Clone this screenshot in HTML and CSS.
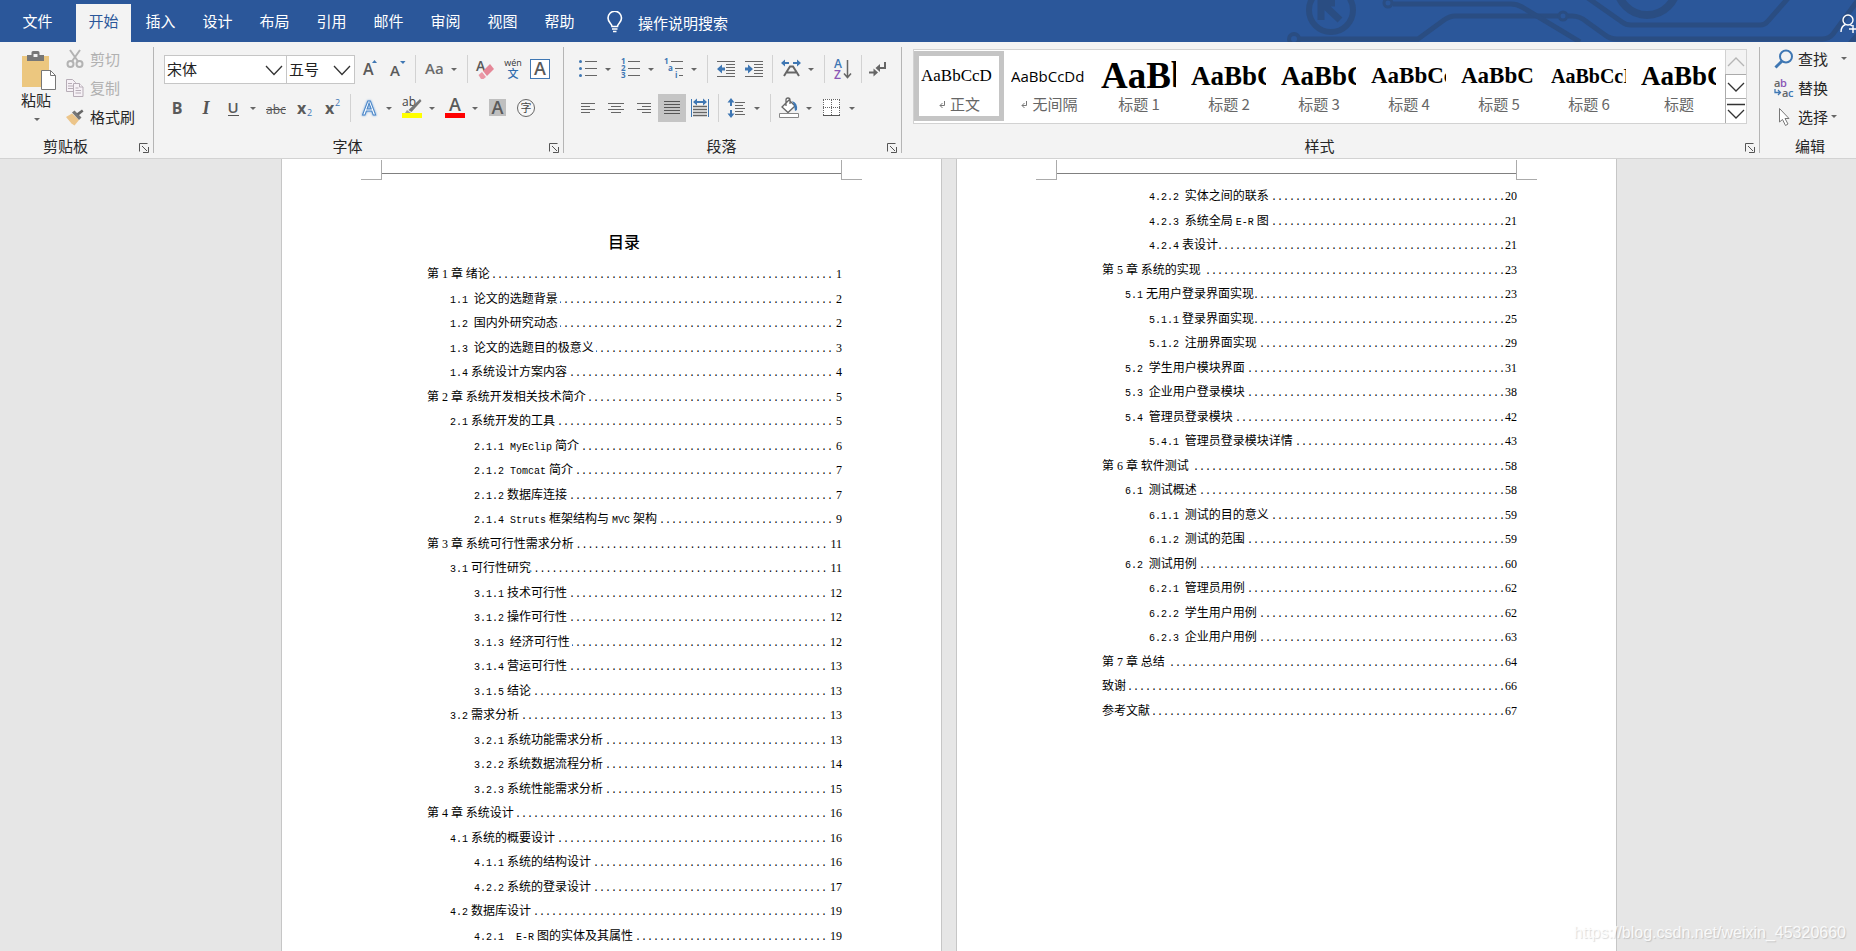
FILE: index.html
```html
<!DOCTYPE html>
<html lang="zh-CN">
<head>
<meta charset="utf-8">
<title>目录 - Word</title>
<link rel="stylesheet" href="styles.css">
</head>
<body>
<div class="app">
  <header class="tabbar">
    <svg class="circuit" width="570" height="42" viewBox="1286 0 570 42" aria-hidden="true">
      <g fill="none" stroke="#2a4d82" stroke-width="5">
        <circle cx="1331" cy="10" r="22" stroke-width="6"/>
        <path d="M1321 20V3h14M1322 3l18 17" stroke-width="7"/>
        <circle cx="1294" cy="39" r="5" stroke-width="4"/>
        <path d="M1299 39h119l26-19q6-4 11-4h103M1568 16h4q8 0 15 6l18 13q5 4 12 4h205q7 0 11-5l25-34"/>
        <circle cx="1563" cy="16" r="4" stroke-width="3"/>
        <circle cx="1388" cy="3" r="4" stroke-width="3"/>
        <path d="M1393 4h118q6 0 11 3l58 35M1585-4l37 26q4 3 9 3h129q5 0 8-4l22-25M1848 46l12-14"/>
        <circle cx="1647" cy="-15" r="30" stroke-width="8"/>
      </g>
    </svg>
    <nav class="tabs">
      <button class="tab file">文件</button>
      <button class="tab active">开始</button>
      <button class="tab">插入</button>
      <button class="tab">设计</button>
      <button class="tab">布局</button>
      <button class="tab">引用</button>
      <button class="tab">邮件</button>
      <button class="tab">审阅</button>
      <button class="tab">视图</button>
      <button class="tab">帮助</button>
    </nav>
    <button class="tell">
      <svg width="18" height="22" viewBox="0 0 18 22" fill="none" stroke="#fff" stroke-width="1.600"><path d="M6 15.500c0-3-4-4-4-8.500a6.500 6.500 0 0 1 13.500 0c0 4.500-4 5.500-4 8.500zM6 18h5.500M7 20.500h3.500"/></svg>
      <span>操作说明搜索</span>
    </button>
    <button class="share" aria-label="共享">
      <svg width="16" height="20" viewBox="0 0 16 20" fill="none" stroke="#fff" stroke-width="1.400"><circle cx="8" cy="6" r="5"/><path d="M1 18c0-4 2-6.500 4.500-7.500M10 10.500l2 1.500M9 15h7M13 11v8"/></svg>
    </button>
  </header>

  <section class="ribbon">
    <div class="group clipboard">
      <div class="body">
        <button class="paste">
          <svg width="36" height="40" viewBox="0 0 36 40"><path d="M1 5h27v31H1z" fill="#ecc77f"/><path d="M6 4h4.500V1.500q0-1.500 1.500-1.500h5q1.500 0 1.500 1.500V4H23v6H6z" fill="#777"/><path d="M12.500 3h4v3h-4z" fill="#f3f3f3"/><path d="M20.500 19.500h9l5 5v14h-14z" fill="#fff" stroke="#777"/><path d="M29.500 19.500v5h5" fill="none" stroke="#777"/></svg>
          <span>粘贴</span>
          <i class="arrow"></i>
        </button>
        <div class="stack">
          <button class="cmd" disabled><svg width="18" height="20" viewBox="0 0 18 20" fill="none" stroke="#b3b3b3" stroke-width="2"><path d="M4 1l8.500 12M14 1L5.500 13"/><circle cx="4.500" cy="15" r="3"/><circle cx="13.500" cy="15" r="3"/></svg>剪切</button>
          <button class="cmd" disabled><svg width="18" height="20" viewBox="0 0 18 20" fill="#f6f1f6" stroke="#b7adb7"><path d="M.5 1.500h6l3 3v9h-9z"/><path d="M2 5.500h4M2 8h5M2 10.500h5" /><path d="M7.500 5.500h6l3.500 3.500v9.500H7.500z"/><path d="M9.500 10h3M9.500 12.500h5.500M9.500 15h5.500M13.500 5.500v3.500h3.500"/></svg>复制</button>
          <button class="cmd"><svg width="18" height="20" viewBox="0 0 18 20"><path d="M0 10l6-3.500 7 6.500-4.500 5.500-3-2z" fill="#ecc58a"/><path d="M6 5.500l2.500-2 7 7-2.500 2.500z" fill="#777"/><path d="M10.500 6.500L16 2.500l1.500 2-5 4z" fill="#666"/></svg>格式刷</button>
        </div>
      </div>
      <div class="foot"><span>剪贴板</span><button class="launch" aria-label="剪贴板设置"><svg width="10" height="10" viewBox="0 0 10 10"><path d="M.5 8.500V.500H8.500M3 3l5 5M9.500 4v5.500H4" fill="none" stroke="#555"/></svg></button></div>
    </div>

    <div class="group font">
      <div class="rows">
        <div class="row">
          <label class="combo name"><select aria-label="字体"><option>宋体</option></select><svg width="18" height="11" viewBox="0 0 18 11"><path d="M1 1l8 8.500L17 1" fill="none" stroke="#333" stroke-width="1.300"/></svg></label>
          <label class="combo size"><select aria-label="字号"><option>五号</option></select><svg width="18" height="11" viewBox="0 0 18 11"><path d="M1 1l8 8.500L17 1" fill="none" stroke="#333" stroke-width="1.300"/></svg></label>
          <button class="b" aria-label="增大字号"><svg viewBox="0 0 28 28"><text x="8" y="20" class="g" font-size="16">A</text><path d="M17 8l2.500-3L22 8z" fill="#3f77b3"/></svg></button>
          <button class="b" aria-label="减小字号"><svg viewBox="0 0 28 28"><text x="7" y="21" class="g" font-size="15">A</text><path d="M17 6h5.500L20 9z" fill="#3f77b3"/></svg></button>
          <i class="sep"></i>
          <button class="b split" aria-label="更改大小写"><svg viewBox="0 0 28 28"><text x="5" y="19" class="g light" font-size="15">Aa</text></svg><i class="arrow"></i></button>
          <i class="sep"></i>
          <button class="b" aria-label="清除格式"><svg viewBox="0 0 28 28"><text x="4" y="16" class="g" font-size="14">A</text><path d="M11 16l7-7 4 5-7 7z" fill="#e58797"/><path d="M6.500 20l3.500-3 4 5-2.500 2H9z" fill="#eb98a6"/></svg></button>
          <button class="b" aria-label="拼音指南"><svg viewBox="0 0 28 28"><text x="13" y="11" text-anchor="middle" font-family="Open Sans" font-size="9" fill="#333">wén</text><text x="13" y="23" text-anchor="middle" font-family="Noto Sans CJK SC" font-size="11" font-weight="500" fill="#2f6cad">文</text></svg></button>
          <button class="b" aria-label="字符边框"><svg viewBox="0 0 28 28"><rect x="2.500" y="4.500" width="19" height="19" fill="#fff" stroke="#3f77b3"/><text x="12" y="20" text-anchor="middle" class="g" font-size="18">A</text></svg></button>
        </div>
        <div class="row">
          <button class="b" aria-label="加粗"><svg viewBox="0 0 28 28"><text x="14" y="20" text-anchor="middle" class="g bold" font-size="16">B</text></svg></button>
          <button class="b" aria-label="倾斜"><svg viewBox="0 0 28 28"><text x="15" y="20" text-anchor="middle" fill="#555" font-family="Liberation Serif" font-style="italic" font-weight="700" font-size="18">I</text></svg></button>
          <button class="b split" aria-label="下划线"><svg viewBox="0 0 28 28"><text x="14" y="19" text-anchor="middle" class="g" font-size="15">U</text><path d="M9 21.500h11" stroke="#555"/></svg><i class="arrow"></i></button>
          <button class="b" aria-label="删除线"><svg viewBox="0 0 28 28"><text x="14" y="20" text-anchor="middle" fill="#555" font-family="Open Sans" font-size="12">abc</text><path d="M4 15.500h20" stroke="#555"/></svg></button>
          <button class="b" aria-label="下标"><svg viewBox="0 0 28 28"><text x="7" y="20" class="g bold" font-size="16">x</text><text x="17" y="22" fill="#3f77b3" font-family="Open Sans" font-size="9">2</text></svg></button>
          <button class="b" aria-label="上标"><svg viewBox="0 0 28 28"><text x="7" y="20" class="g bold" font-size="16">x</text><text x="17" y="12" fill="#3f77b3" font-family="Open Sans" font-size="9">2</text></svg></button>
          <i class="sep"></i>
          <button class="b split" aria-label="文本效果"><svg viewBox="0 0 28 28"><text class="glow" x="14" y="21" text-anchor="middle">A</text></svg><i class="arrow"></i></button>
          <button class="b split" aria-label="突出显示"><svg viewBox="0 0 28 28"><text x="4" y="12" fill="#444" font-family="Open Sans" font-size="12">ab</text><path d="M22 5l1.500 2-10 11-3-2z" fill="#777"/><path d="M9 16l4 3H7z" fill="#999"/><path d="M4 19h20v5H4z" fill="#ff0"/></svg><i class="arrow"></i></button>
          <button class="b split" aria-label="字体颜色"><svg viewBox="0 0 28 28"><text x="14" y="17" text-anchor="middle" class="g" font-size="18">A</text><path d="M4 19h20v5H4z" fill="#f00"/></svg><i class="arrow"></i></button>
          <button class="b" aria-label="字符底纹"><svg viewBox="0 0 28 28"><path d="M5 5h17v17H5z" fill="#bfbfbf"/><text x="13.500" y="20" text-anchor="middle" class="g" font-size="18">A</text></svg></button>
          <button class="b" aria-label="带圈字符"><svg viewBox="0 0 28 28"><circle cx="14" cy="14" r="8.500" fill="#f8f8f8" stroke="#666"/><text x="14" y="18" text-anchor="middle" fill="#444" font-family="Noto Sans CJK SC" font-size="11">字</text></svg></button>
        </div>
      </div>
      <div class="foot"><span>字体</span><button class="launch" aria-label="字体设置"><svg width="10" height="10" viewBox="0 0 10 10"><path d="M.5 8.500V.500H8.500M3 3l5 5M9.500 4v5.500H4" fill="none" stroke="#555"/></svg></button></div>
    </div>

    <div class="group para">
      <div class="rows">
        <div class="row">
          <button class="b split" aria-label="项目符号"><svg viewBox="0 0 28 28"><path d="M11 6.500h12M11 13.500h12M11 20.500h12" stroke="#666"/><g fill="#3f77b3"><circle cx="6.500" cy="6.500" r="1.500"/><circle cx="6.500" cy="13.500" r="1.500"/><circle cx="6.500" cy="20.500" r="1.500"/></g></svg><i class="arrow"></i></button>
          <button class="b split" aria-label="编号"><svg viewBox="0 0 28 28"><path d="M11 6.500h12M11 13.500h12M11 20.500h12" stroke="#666"/><g class="num"><text x="4" y="9">1</text><text x="4" y="16">2</text><text x="4" y="23">3</text></g></svg><i class="arrow"></i></button>
          <button class="b split" aria-label="多级列表"><svg viewBox="0 0 28 28"><path d="M11 6.500h12M15 13.500h8M19 20.500h4" stroke="#666"/><g class="num"><text x="4" y="9">1</text><text x="8" y="16">a</text><text x="15" y="23">i</text></g></svg><i class="arrow"></i></button>
          <i class="sep"></i>
          <button class="b" aria-label="减少缩进"><svg viewBox="0 0 28 28"><path d="M5 6.500h18M14 9.500h9M14 12.500h9M14 15.500h9M14 18.500h9M5 21.500h18" stroke="#666"/><path d="M5 14l5-4.500v3h3v3h-3v3z" fill="#3f77b3"/></svg></button>
          <button class="b" aria-label="增加缩进"><svg viewBox="0 0 28 28"><path d="M5 6.500h18M14 9.500h9M14 12.500h9M14 15.500h9M14 18.500h9M5 21.500h18" stroke="#666"/><path d="M13 14l-5-4.500v3H5v3h3v3z" fill="#3f77b3"/></svg></button>
          <i class="sep"></i>
          <button class="b split" aria-label="中文版式"><svg viewBox="0 0 28 28"><path d="M7 21l6-9.500h3L22 21M10 17.500h9" fill="none" stroke="#666" stroke-width="2"/><path d="M4 8l4-3.500V7h4v2H8v2.500zM24 8l-4-3.500V7h-4v2h4v2.500z" fill="#3f77b3"/></svg><i class="arrow"></i></button>
          <i class="sep"></i>
          <button class="b" aria-label="排序"><svg viewBox="0 0 28 28"><text x="5" y="13" fill="#3f77b3" font-family="Open Sans" font-weight="600" font-size="12">A</text><text x="5" y="24" fill="#8a56b5" font-family="Open Sans" font-weight="600" font-size="12">Z</text><path d="M18.500 5v17M15 18.500l3.500 4 3.500-4" fill="none" stroke="#666" stroke-width="1.500"/></svg></button>
          <i class="sep"></i>
          <button class="b" aria-label="显示编辑标记"><svg viewBox="0 0 28 28"><path d="M19 7v6h-6M3 17.500h6" fill="none" stroke="#666" stroke-width="2"/><path d="M9.500 13l4.500-4v8zM12 17.500l-4.500-4v8z" fill="#666"/></svg></button>
        </div>
        <div class="row">
          <button class="b" aria-label="左对齐"><svg viewBox="0 0 28 28"><path d="M7 9.500h14M7 12.500h9M7 15.500h14M7 18.500h9" stroke="#666"/></svg></button>
          <button class="b" aria-label="居中"><svg viewBox="0 0 28 28"><path d="M6 9.500h16M9 12.500h10M6 15.500h16M9 18.500h10" stroke="#666"/></svg></button>
          <button class="b" aria-label="右对齐"><svg viewBox="0 0 28 28"><path d="M7 9.500h14M12 12.500h9M7 15.500h14M12 18.500h9" stroke="#666"/></svg></button>
          <button class="b on" aria-label="两端对齐"><svg viewBox="0 0 28 28"><path d="M6 7.500h16M6 10.500h16M6 13.500h16M6 16.500h16M6 19.500h16" stroke="#555"/></svg></button>
          <button class="b" aria-label="分散对齐"><svg viewBox="0 0 28 28"><path d="M5.500 5v18M22.500 5v18" stroke="#3f77b3"/><path d="M7 12.500h14M7 15.500h14M7 18.500h14M7 21.500h14" stroke="#666" stroke-width="1.500"/><path d="M7 8l4-3.500V7h6V4.500L21 8l-4 3.500V9h-6v2.500z" fill="#3f77b3"/></svg></button>
          <i class="sep"></i>
          <button class="b split" aria-label="行距"><svg viewBox="0 0 28 28"><path d="M12 8.500h10M12 11.500h8M12 14.500h10M12 17.500h8M12 20.500h10" stroke="#666"/><path d="M8 4l3.500 4.500h-2.500v3.500H7V8.500H4.500zM8 24l3.500-4.500h-2.500V16H7v3.500H4.500z" fill="#3f77b3"/></svg><i class="arrow"></i></button>
          <i class="sep"></i>
          <button class="b split" aria-label="底纹"><svg viewBox="0 0 28 28"><path d="M7 13l7-7 6 6-7 6.500zM11 12V6q0-2 2-2t2 2v4" fill="#fff" stroke="#666" stroke-width="1.300"/><path d="M17 7q6 2 5 9l-2 1-1-6z" fill="#3f77b3"/><path d="M4.500 19.500h19v4h-19z" fill="#fff" stroke="#888"/></svg><i class="arrow"></i></button>
          <button class="b split" aria-label="边框"><svg viewBox="0 0 28 28"><path d="M5 5h17v17H5z" fill="#fff"/><path d="M5 5.500h17M5.500 6v16M21.500 6v16M13.500 6v16M5 13.500h17" fill="none" stroke="#666" stroke-dasharray="1 1"/><path d="M5 21.500h17" stroke="#555"/></svg><i class="arrow"></i></button>
        </div>
      </div>
      <div class="foot"><span>段落</span><button class="launch" aria-label="段落设置"><svg width="10" height="10" viewBox="0 0 10 10"><path d="M.5 8.500V.500H8.500M3 3l5 5M9.500 4v5.500H4" fill="none" stroke="#555"/></svg></button></div>
    </div>

    <div class="group styles">
      <div class="gallery">
        <div class="items">
          <button class="style sel"><span class="pv normal">AaBbCcD</span><span class="nm"><svg class="ret" viewBox="0 0 8 9"><path d="M6.500 1v4.500H2M4.500 3L2 5.500 4.500 8" fill="none" stroke="#777"/></svg>正文</span></button>
          <button class="style"><span class="pv plain">AaBbCcDd</span><span class="nm"><svg class="ret" viewBox="0 0 8 9"><path d="M6.500 1v4.500H2M4.500 3L2 5.500 4.500 8" fill="none" stroke="#777"/></svg>无间隔</span></button>
          <button class="style"><span class="pv h1">AaBb</span><span class="nm">标题 1</span></button>
          <button class="style"><span class="pv h2">AaBbC</span><span class="nm">标题 2</span></button>
          <button class="style"><span class="pv h2">AaBbC</span><span class="nm">标题 3</span></button>
          <button class="style"><span class="pv h4">AaBbCc</span><span class="nm">标题 4</span></button>
          <button class="style"><span class="pv h4">AaBbC</span><span class="nm">标题 5</span></button>
          <button class="style"><span class="pv h6">AaBbCcI</span><span class="nm">标题 6</span></button>
          <button class="style"><span class="pv h2">AaBbC</span><span class="nm">标题</span></button>
        </div>
        <div class="scroll">
          <button disabled aria-label="上一行"><svg width="18" height="10" viewBox="0 0 18 10"><path d="M1 9l8-8 8 8" fill="none" stroke="#b5b5b5" stroke-width="1.300"/></svg></button>
          <button aria-label="下一行"><svg width="18" height="10" viewBox="0 0 18 10"><path d="M1 1l8 8 8-8" fill="none" stroke="#333" stroke-width="1.300"/></svg></button>
          <button aria-label="其他样式"><svg width="18" height="16" viewBox="0 0 18 16"><path d="M0 1.500h18M1 7l8 8 8-8" fill="none" stroke="#333" stroke-width="1.300"/></svg></button>
        </div>
      </div>
      <div class="foot"><span>样式</span><button class="launch" aria-label="样式设置"><svg width="10" height="10" viewBox="0 0 10 10"><path d="M.5 8.500V.500H8.500M3 3l5 5M9.500 4v5.500H4" fill="none" stroke="#555"/></svg></button></div>
    </div>

    <div class="group edit">
      <div class="stack">
        <button class="cmd find"><svg width="20" height="20" viewBox="0 0 20 20" fill="none" stroke="#3f77b3"><circle cx="12" cy="7.500" r="6" stroke-width="2"/><path d="M8 12l-6.500 6.500" stroke-width="3"/></svg>查找<i class="arrow"></i></button>
        <button class="cmd"><svg width="20" height="20" viewBox="0 0 20 20"><g font-family="Open Sans" font-weight="600" font-size="11"><text x="0" y="9" fill="#666">a</text><text x="6" y="9" fill="#8a56b5">b</text><text x="8" y="19" fill="#666">a</text><text x="14" y="19" fill="#3f77b3">c</text></g><path d="M1 11v3.500h5M4 12l2.500 2.500L4 17" fill="none" stroke="#3f77b3" stroke-width="1.300"/></svg>替换</button>
        <button class="cmd"><svg width="20" height="20" viewBox="0 0 20 20"><path d="M5.500 1.500v13.500l3-2.500 3 6 2.500-1.500-3-5.500h4z" fill="#fff" stroke="#777"/></svg>选择<i class="arrow"></i></button>
      </div>
      <div class="foot"><span>编辑</span></div>
    </div>
  </section>

  <main class="desk">
    <article class="page">
      <div class="head"><i class="rule"></i></div>
      <div class="text">
        <h1>目录</h1>
        <ol class="toc">
          <li><a href="#"><span class="t">第<b>1</b>章 绪论 </span><i></i><b>1</b></a></li>
          <li class="l2"><a href="#"><span class="t"><b>1.1</b> 论文的选题背景 </span><i></i><b>2</b></a></li>
          <li class="l2"><a href="#"><span class="t"><b>1.2</b> 国内外研究动态 </span><i></i><b>2</b></a></li>
          <li class="l2"><a href="#"><span class="t"><b>1.3</b> 论文的选题目的极意义 </span><i></i><b>3</b></a></li>
          <li class="l2"><a href="#"><span class="t"><b>1.4</b>系统设计方案内容</span><i></i><b>4</b></a></li>
          <li><a href="#"><span class="t">第<b>2</b>章 系统开发相关技术简介 </span><i></i><b>5</b></a></li>
          <li class="l2"><a href="#"><span class="t"><b>2.1</b>系统开发的工具</span><i></i><b>5</b></a></li>
          <li class="l3"><a href="#"><span class="t"><b>2.1.1 MyEclip</b>简介</span><i></i><b>6</b></a></li>
          <li class="l3"><a href="#"><span class="t"><b>2.1.2 Tomcat</b>简介</span><i></i><b>7</b></a></li>
          <li class="l3"><a href="#"><span class="t"><b>2.1.2</b>数据库连接</span><i></i><b>7</b></a></li>
          <li class="l3"><a href="#"><span class="t"><b>2.1.4 Struts</b>框架结构与<b>MVC</b>架构</span><i></i><b>9</b></a></li>
          <li><a href="#"><span class="t">第<b>3</b>章 系统可行性需求分析 </span><i></i><b>11</b></a></li>
          <li class="l2"><a href="#"><span class="t"><b>3.1</b>可行性研究</span><i></i><b>11</b></a></li>
          <li class="l3"><a href="#"><span class="t"><b>3.1.1</b>技术可行性</span><i></i><b>12</b></a></li>
          <li class="l3"><a href="#"><span class="t"><b>3.1.2</b>操作可行性</span><i></i><b>12</b></a></li>
          <li class="l3"><a href="#"><span class="t"><b>3.1.3</b> 经济可行性 </span><i></i><b>12</b></a></li>
          <li class="l3"><a href="#"><span class="t"><b>3.1.4</b>营运可行性</span><i></i><b>13</b></a></li>
          <li class="l3"><a href="#"><span class="t"><b>3.1.5</b>结论</span><i></i><b>13</b></a></li>
          <li class="l2"><a href="#"><span class="t"><b>3.2</b>需求分析</span><i></i><b>13</b></a></li>
          <li class="l3"><a href="#"><span class="t"><b>3.2.1</b>系统功能需求分析</span><i></i><b>13</b></a></li>
          <li class="l3"><a href="#"><span class="t"><b>3.2.2</b>系统数据流程分析</span><i></i><b>14</b></a></li>
          <li class="l3"><a href="#"><span class="t"><b>3.2.3</b>系统性能需求分析</span><i></i><b>15</b></a></li>
          <li><a href="#"><span class="t">第<b>4</b>章 系统设计 </span><i></i><b>16</b></a></li>
          <li class="l2"><a href="#"><span class="t"><b>4.1</b>系统的概要设计</span><i></i><b>16</b></a></li>
          <li class="l3"><a href="#"><span class="t"><b>4.1.1</b>系统的结构设计</span><i></i><b>16</b></a></li>
          <li class="l3"><a href="#"><span class="t"><b>4.2.2</b>系统的登录设计</span><i></i><b>17</b></a></li>
          <li class="l2"><a href="#"><span class="t"><b>4.2</b>数据库设计</span><i></i><b>19</b></a></li>
          <li class="l3"><a href="#"><span class="t"><b>4.2.1  E-R</b>图的实体及其属性</span><i></i><b>19</b></a></li>
        </ol>
      </div>
    </article>
    <article class="page next">
      <div class="head"><i class="rule"></i></div>
      <div class="text">
        <ol class="toc">
          <li class="l3"><a href="#"><span class="t"><b>4.2.2</b> 实体之间的联系 </span><i></i><b>20</b></a></li>
          <li class="l3"><a href="#"><span class="t"><b>4.2.3</b> 系统全局<b>E-R</b>图 </span><i></i><b>21</b></a></li>
          <li class="l3"><a href="#"><span class="t"><b>4.2.4</b>表设计</span><i></i><b>21</b></a></li>
          <li><a href="#"><span class="t">第<b>5</b>章 系统的实现 </span><i></i><b>23</b></a></li>
          <li class="l2"><a href="#"><span class="t"><b>5.1</b>无用户登录界面实现</span><i></i><b>23</b></a></li>
          <li class="l3"><a href="#"><span class="t"><b>5.1.1</b>登录界面实现</span><i></i><b>25</b></a></li>
          <li class="l3"><a href="#"><span class="t"><b>5.1.2</b> 注册界面实现 </span><i></i><b>29</b></a></li>
          <li class="l2"><a href="#"><span class="t"><b>5.2</b> 学生用户模块界面 </span><i></i><b>31</b></a></li>
          <li class="l2"><a href="#"><span class="t"><b>5.3</b> 企业用户登录模块 </span><i></i><b>38</b></a></li>
          <li class="l2"><a href="#"><span class="t"><b>5.4</b> 管理员登录模块 </span><i></i><b>42</b></a></li>
          <li class="l3"><a href="#"><span class="t"><b>5.4.1</b> 管理员登录模块详情 </span><i></i><b>43</b></a></li>
          <li><a href="#"><span class="t">第<b>6</b>章 软件测试 </span><i></i><b>58</b></a></li>
          <li class="l2"><a href="#"><span class="t"><b>6.1</b> 测试概述 </span><i></i><b>58</b></a></li>
          <li class="l3"><a href="#"><span class="t"><b>6.1.1</b> 测试的目的意义 </span><i></i><b>59</b></a></li>
          <li class="l3"><a href="#"><span class="t"><b>6.1.2</b> 测试的范围 </span><i></i><b>59</b></a></li>
          <li class="l2"><a href="#"><span class="t"><b>6.2</b> 测试用例 </span><i></i><b>60</b></a></li>
          <li class="l3"><a href="#"><span class="t"><b>6.2.1</b> 管理员用例 </span><i></i><b>62</b></a></li>
          <li class="l3"><a href="#"><span class="t"><b>6.2.2</b> 学生用户用例 </span><i></i><b>62</b></a></li>
          <li class="l3"><a href="#"><span class="t"><b>6.2.3</b> 企业用户用例 </span><i></i><b>63</b></a></li>
          <li><a href="#"><span class="t">第<b>7</b>章 总结 </span><i></i><b>64</b></a></li>
          <li><a href="#"><span class="t">致谢 </span><i></i><b>66</b></a></li>
          <li><a href="#"><span class="t">参考文献 </span><i></i><b>67</b></a></li>
        </ol>
      </div>
    </article>
    <span class="mark">https://blog.csdn.net/weixin_45320660</span>
  </main>
</div>
</body>
</html>
```
FILE: styles.css
```css
* { box-sizing: border-box; }
body {
  margin: 0;
  font-family: "Noto Sans CJK SC", sans-serif;
  font-size: 15px;
  color: #262626;
}
button {
  margin: 0;
  padding: 0;
  border: 0;
  background: none;
  font: inherit;
  color: inherit;
}
svg { display: block; flex: none; }

.app { display: flex; flex-direction: column; height: 100vh; overflow: hidden; }

/* tab strip */
.tabbar {
  position: relative;
  flex: none;
  display: flex;
  height: 42px;
  background: #2b579a;
  color: #fff;
}
.circuit { position: absolute; top: 0; right: 0; }
.tabs { display: flex; padding-top: 4px; }
.tab { width: 57px; padding-bottom: 5px; line-height: 22px; }
.tab.file { width: 75px; }
.tab.active { background: #f3f3f3; color: #2b579a; width: 55px; margin: 0 1px; }
.tell { display: flex; align-items: center; gap: 14px; margin-left: 18px; padding-top: 2px; }
.share { position: relative; margin-left: auto; padding-top: 6px; }

/* ribbon */
.ribbon {
  flex: none;
  display: flex;
  padding: 5px 0;
  background: #f3f3f3;
  border-bottom: 1px solid #d2d2d2;
}
.group {
  display: flex;
  flex-direction: column;
  min-height: 106px;
  border-right: 1px solid #b5b5b5;
}
.group.edit { border-right: 0; }
.foot {
  display: flex;
  align-items: flex-start;
  margin-top: auto;
  line-height: 13px;
  padding: 0 4px 1px 0;
}
.foot span { flex: 1; text-align: center; padding-right: 8px; }
.launch { padding-top: 4px; height: 13px; }
.arrow {
  border: 3px solid transparent;
  border-top-color: #666;
  border-bottom: 0;
}

.clipboard { width: 154px; }
.clipboard .body { display: flex; }
.paste {
  display: flex;
  flex-direction: column;
  align-items: flex-start;
  width: 36px;
  margin: 4px 9px 0 21px;
  line-height: 18px;
}
.paste .arrow { margin: 9px 0 0 13px; }
.stack { display: flex; flex-direction: column; gap: 3px; }
.cmd { display: flex; align-items: center; height: 26px; gap: 5px; line-height: 22px; padding-bottom: 3px; }
.cmd svg { margin-right: 1px; }
.cmd:disabled { color: #b1b1b1; }

.rows { display: flex; flex-direction: column; gap: 11px; padding: 8px 0 0 10px; }
.row { display: flex; height: 28px; }
.font { width: 410px; }
.font .row { margin-left: -1px; }
.para { width: 338px; }
.b { display: flex; align-items: center; width: 28px; height: 28px; flex: none; }
.b svg { width: 28px; height: 28px; }
.b.split { width: 43px; }
.b.split .arrow { margin-left: 3px; }
.b.on { background: #c5c5c5; }
.sep { flex: none; width: 1px; margin: 0 4px; background: #d2d2d2; }
.g { fill: #5a5a5a; font-family: "Open Sans", sans-serif; font-weight: 600; }
.g.bold { font-weight: 700; }
.g.light { fill: #6b6b6b; }
.glow {
  fill: #fff;
  stroke: #4a86c8;
  stroke-width: 1px;
  font: 600 20px "Open Sans", sans-serif;
  filter: drop-shadow(0 0 1px #6ea3dc);
}
.num { fill: #3f77b3; font-family: "Open Sans", sans-serif; font-weight: 700; font-size: 8px; }

.combo { position: relative; display: block; }
.combo.name { width: 123px; margin-left: 1px; }
.combo.size { width: 69px; margin-left: -1px; }
.combo select {
  appearance: none;
  width: 100%;
  height: 29px;
  padding: 0 2px 2px;
  border: 1px solid #c6c6c6;
  border-radius: 0;
  background: #fff;
  font: inherit;
  color: #222;
}
.combo svg { position: absolute; right: 4px; top: 10px; pointer-events: none; }

.styles { flex: 1; min-width: 0; }
.gallery {
  display: flex;
  margin: 2px 12px 0 11px;
  border: 1px solid #d2d2d2;
  background: #fff;
}
.items { display: flex; flex: 1; min-width: 0; height: 73px; overflow: hidden; padding-top: 1px; }
.style {
  display: flex;
  flex-direction: column;
  flex: none;
  width: 90px;
  height: 70px;
  padding: 2px 2px 0;
  border: 5px solid transparent;
}
.style.sel { border-color: #c5c5c5; }
.pv {
  height: 36px;
  line-height: 36px;
  width: 75px;
  overflow: hidden;
  white-space: nowrap;
  text-align: left;
  color: #000;
  font-family: "Liberation Serif", serif;
  font-weight: 700;
}
.pv.normal { font-weight: 400; font-size: 17px; }
.pv.plain { font-family: "Open Sans", sans-serif; font-weight: 400; font-size: 15px; }
.pv.h1 { font-size: 37px; }
.pv.h2 { font-size: 27px; }
.pv.h4 { font-size: 23px; }
.pv.h6 { font-size: 20px; }
.nm {
  display: flex;
  align-items: center;
  justify-content: center;
  gap: 4px;
  line-height: 20px;
  color: #666;
}
.ret { width: 8px; height: 9px; }
.scroll { display: flex; flex-direction: column; width: 21px; }
.scroll button {
  display: flex;
  align-items: center;
  justify-content: center;
  flex: 1;
  background: #fff;
  border: 1px solid #ababab;
  border-width: 1px 0 0 1px;
}
.scroll button:first-child { border-top: 0; border-color: #d2d2d2; background: #f3f3f3; }

.edit { width: 96px; }
.edit .stack { padding-left: 14px; }
.edit .cmd { gap: 3px; }
.edit .find .arrow { margin-left: 10px; }
.edit .foot { padding: 0 0 1px 4px; }
.edit .foot span { padding-right: 0; }

/* document area */
.desk {
  position: relative;
  flex: 1;
  min-height: 0;
  display: flex;
  justify-content: center;
  gap: 14px;
  padding-left: 42px;
  background: #e6e6e6;
  overflow: hidden;
}
.page {
  width: 661px;
  background: #fff;
  border: 1px solid #c6c6c6;
  border-width: 0 1px;
}
.head {
  display: flex;
  margin: 1px 79px 0 79px;
  height: 20px;
}
.head::before, .head::after {
  content: "";
  width: 20px;
  border: 1px solid #ababab;
  border-width: 0 1px 1px 0;
}
.head::after { border-width: 0 0 1px 1px; }
.rule { flex: 1; height: 14px; border-bottom: 1px solid #808080; }
.text { padding: 0 99px 0 124px; color: #000; }
.page h1 {
  margin: 49px 0 8px;
  font-size: 16px;
  line-height: 24px;
  font-weight: 500;
  text-align: center;
}
.toc { list-style: none; margin: 0; padding: 0 0 0 21px; }
.next .toc { padding-top: 3px; }
.toc li { font-size: 12px; line-height: 24px; }
.toc li:nth-child(even) { padding-top: 1px; }
.toc .l2 { padding-left: 23px; }
.toc .l3 { padding-left: 47px; }
.toc a { display: flex; align-items: baseline; height: 24px; color: #000; text-decoration: none; }
.toc .t { white-space: pre; }
.toc b {
  font-family: "Liberation Serif", serif;
  font-weight: 400;
  font-size: 12px;
  line-height: 12px;
}
.toc .t b { margin: 0 3px; }
.l2 .t b, .l3 .t b { font-family: "Liberation Mono", monospace; font-size: 10px; }
.l2 .t b:first-child, .l3 .t b:first-child { margin-left: 0; }
.toc i {
  flex: 1;
  min-width: 0;
  display: flex;
  justify-content: flex-end;
  overflow: hidden;
  font: 10px/12px "Liberation Mono", monospace;
  margin-right: 3px;
}
.next .toc i { margin-right: 0; }
.toc i::before { content: "......................................................................"; }

.mark {
  position: absolute;
  right: 10px;
  bottom: 8px;
  font: 16px/20px "Liberation Sans", sans-serif;
  color: rgba(255, 255, 255, .85);
  text-shadow: 1px 1px 1px rgba(0, 0, 0, .15);
}
```
